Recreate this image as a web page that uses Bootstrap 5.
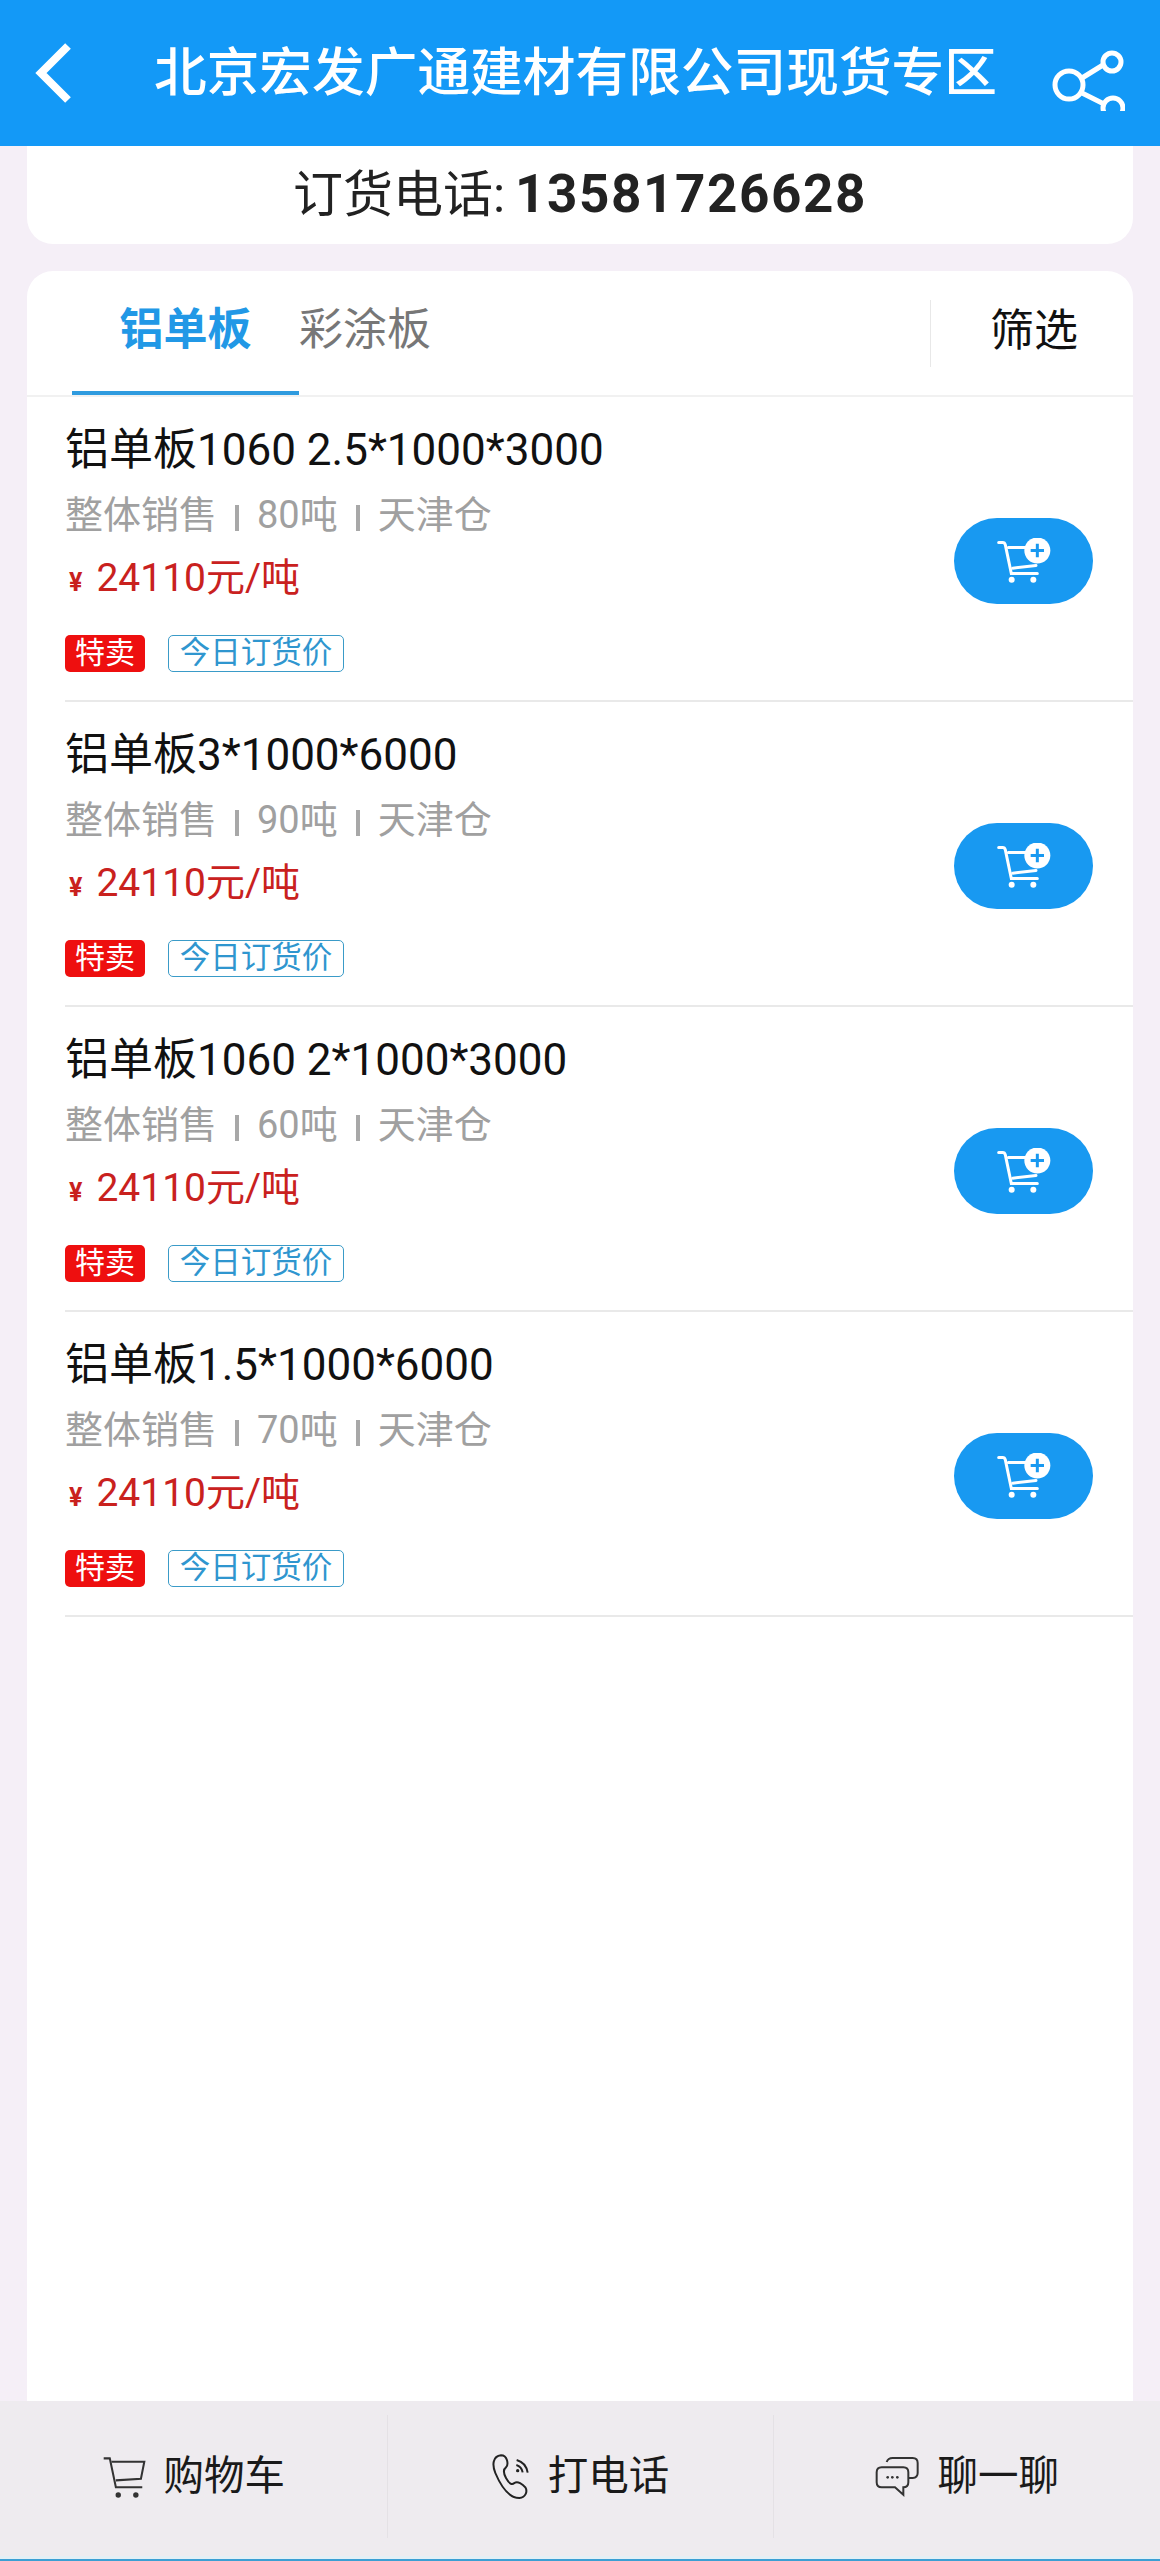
<!DOCTYPE html>
<html lang="zh-CN">
<head>
    <title>现货专区</title>
    <meta charset="utf-8">
    <meta name="viewport" content="width=device-width, initial-scale=1">
    <link href="https://cdn.jsdelivr.net/npm/bootstrap@5.3.0/dist/css/bootstrap.min.css" rel="stylesheet">
    <script src="https://cdn.jsdelivr.net/npm/bootstrap@5.3.0/dist/js/bootstrap.bundle.min.js"></script>
    <style>
        html, body { height: 100%; }
        body { background: #f5eff7; font-family: Roboto, "Noto Sans CJK SC", sans-serif; color: #222; }
        .page-wrap { height: 2561px; }
        .top-bar { height: 146px; background: #1399f7; padding: 0 35px; flex-shrink: 0; flex-wrap: nowrap; }
        .top-title { color: #fff; font-size: 52.7px; font-weight: 500; line-height: 1; margin: 0 auto 0 81px; white-space: nowrap; }
        .phone-box { height: 98px; margin: 0 27px; background: #fff; border: 0; border-radius: 0 0 26px 26px; flex-shrink: 0; }
        .phone-label { font-size: 50px; color: #222; }
        .phone-num { font-size: 53px; font-weight: 700; letter-spacing: 1.6px; color: #222; margin-left: 10px; }
        .main-box { margin: 27px 27px 0; background: #fff; border: 0; border-radius: 26px 26px 0 0; min-height: 0; }
        .tab-row { height: 126px; border-bottom: 2px solid #f1f1f1; padding-left: 45px; }
        .tab-item { width: 227px; height: 124px; line-height: 118px; text-align: center; font-size: 44px; color: #777; padding: 0; }
        .tab-on { color: #2198e6; font-weight: 700; border-bottom: 4px solid #2f9bdf; width: 227px; }
        .tab-off { width: 178px; padding-right: 46px; }
        .filter-box { width: 203px; height: 67px; margin-top: 29px; border-left: 1px solid #e8e8e8; font-size: 44px; color: #111; padding-left: 59px; line-height: 62px; }
        .goods-row { height: 305px; margin-left: 38px; border-bottom: 2px solid #e9e9e9; padding-top: 21px; padding-right: 40px; border-radius: 0; }
        .goods-name { font-size: 44px; line-height: 64px; color: #111; }
        .goods-meta { font-size: 38px; line-height: 66px; color: #a0a0a0; }
        .meta-bar { display: inline-block; width: 4px; height: 26px; background: #a8a8a8; margin: 0 18px; vertical-align: -3px; }
        .goods-price { font-size: 39px; line-height: 60px; color: #c9211e; }
        .yen-mark { font-size: 25px; font-weight: 700; margin: 0 14px 0 4px; }
        .goods-tags { margin-top: 22px; gap: 23px; }
        .tag-red { width: 80px; height: 37px; line-height: 35px; background: #ee0f0f; color: #fff; font-size: 30px; border-radius: 5px; text-align: center; }
        .tag-line { width: 176px; height: 37px; line-height: 33px; border: 1px solid #3a9bc8; color: #2f96cf; font-size: 30.5px; border-radius: 5px; text-align: center; }
        .cart-btn { width: 139px; height: 86px; margin-top: 100px; background: #1899f1; border: 0; border-radius: 43px; padding: 0; display: flex; align-items: center; justify-content: center; flex-shrink: 0; }
        .cart-btn:hover { background: #1899f1; }
        .bottom-bar { height: 155px; background: #eeebef; flex-shrink: 0; border-bottom: 0; padding-top: 14px; position: relative; }
        .bottom-cell { height: 123px; font-size: 40.5px; color: #1a1a1a; gap: 18px; }
        .bottom-cell + .bottom-cell { border-left: 1px solid #e4e1e5; }
        .bottom-strip { height: 5px; background: #e4eff5; border-bottom: 2px solid #3b9fd4; flex-shrink: 0; }
    </style>
</head>
<body>
<div class="page-wrap d-flex flex-column">
    <nav class="navbar top-bar">
        <svg width="38" height="60" viewBox="0 0 38 60"><path d="M33 3 6 30l27 27" fill="none" stroke="#fff" stroke-width="8"/></svg>
        <div class="top-title">北京宏发广通建材有限公司现货专区</div>
        <svg width="74" height="76" viewBox="1051 25 74 76" class="me-0">
            <g fill="none" stroke="#fff" stroke-width="5">
                <circle cx="1069" cy="75" r="14"/>
                <circle cx="1112" cy="52" r="9"/>
                <circle cx="1113" cy="102" r="10" transform="translate(0 -4)"/>
                <path d="m1082 68 21-13M1082 83l22 11"/>
            </g>
        </svg>
    </nav>

    <div class="card phone-box flex-row align-items-center justify-content-center">
        <span class="phone-label">订货电话:</span><span class="phone-num">13581726628</span>
    </div>

    <div class="card main-box flex-grow-1">
        <div class="tab-row d-flex">
            <div class="tab-item tab-on">铝单板</div>
            <div class="tab-item tab-off">彩涂板</div>
            <div class="filter-box ms-auto">筛选</div>
        </div>

        <div id="goodsList"></div>
    </div>

    <div class="bottom-bar row g-0">
        <div class="col-4 bottom-cell d-flex align-items-center justify-content-center">
            <svg width="44" height="44" viewBox="60 30 130 130"><g fill="none" stroke="#333" stroke-width="6"><path d="M65 40h18l18 85h78"/><path d="M88 50h97l-10 50-74 5"/></g><circle cx="108" cy="148" r="8" fill="#333"/><circle cx="160" cy="148" r="8" fill="#333"/></svg>
            <span>购物车</span>
        </div>
        <div class="col-4 bottom-cell d-flex align-items-center justify-content-center">
            <svg width="38" height="46" viewBox="58 28 114 138"><g fill="none" stroke="#222" stroke-width="6"><path d="M85 32C60 35 58 60 68 85c17 40 42 75 72 75 20-2 25-20 18-32-8-10-23-20-33-13-7 7-15 3-25-15-8-15-10-25 0-32 8-8 5-36-15-36Z"/><path d="M132 46c18 5 30 20 33 38M131 61c10 3 17 11 19 22"/></g><circle cx="135" cy="78" r="5" fill="#222"/></svg>
            <span>打电话</span>
        </div>
        <div class="col-4 bottom-cell d-flex align-items-center justify-content-center">
            <svg width="44" height="40" viewBox="70 35 132 120"><g fill="none" stroke="#333" stroke-width="6"><path d="M105 50q4-12 18-12h60q15 0 15 15v30q0 14-15 15h-11"/><path d="M90 66h65q15 0 15 15v30q0 15-15 15v22l-25-22H90q-15 0-15-15V81q0-15 15-15Z"/></g><circle cx="108" cy="96" r="4" fill="#333"/><circle cx="122" cy="96" r="4" fill="#333"/><circle cx="137" cy="96" r="4" fill="#333"/></svg>
            <span>聊一聊</span>
        </div>
    </div>
    <div class="bottom-strip"></div>
</div>
<script>
    const goods = [
        {name: "铝单板1060 2.5*1000*3000", weight: "80吨"},
        {name: "铝单板3*1000*6000", weight: "90吨"},
        {name: "铝单板1060 2*1000*3000", weight: "60吨"},
        {name: "铝单板1.5*1000*6000", weight: "70吨"}
    ];

    const cartIcon = `<svg width="54" height="46" viewBox="228 118 162 137"><g fill="none" stroke="#fff" stroke-width="9" stroke-linecap="round"><path d="M233 131h12q6 0 8 7l18 86h78"/><path d="M262 146h60M275 208l70-8"/></g><circle cx="272" cy="243" r="9" fill="#fff"/><circle cx="337" cy="243" r="9" fill="#fff"/><circle cx="349" cy="155" r="39" fill="#fff"/><path d="M349 135v40M329 155h40" stroke="#1899f1" stroke-width="9"/></svg>`;

    document.getElementById("goodsList").innerHTML = goods.map(item => `
        <div class="goods-row d-flex justify-content-between align-items-start">
            <div>
                <div class="goods-name">${item.name}</div>
                <div class="goods-meta">整体销售<span class="meta-bar"></span>${item.weight}<span class="meta-bar"></span>天津仓</div>
                <div class="goods-price"><span class="yen-mark">¥</span>24110元/吨</div>
                <div class="goods-tags d-flex">
                    <div class="tag-red">特卖</div>
                    <div class="tag-line">今日订货价</div>
                </div>
            </div>
            <button class="btn cart-btn" type="button">${cartIcon}</button>
        </div>`).join("");
</script>
</body>
</html>
